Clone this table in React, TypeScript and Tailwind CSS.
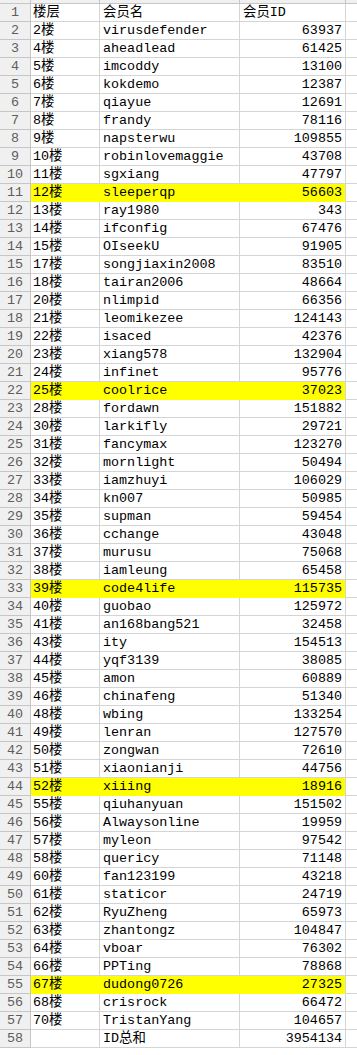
const rows: [string, string, string][] = [
  ['楼层', '会员名', '会员ID'],
  ['2楼', 'virusdefender', '63937'],
  ['4楼', 'aheadlead', '61425'],
  ['5楼', 'imcoddy', '13100'],
  ['6楼', 'kokdemo', '12387'],
  ['7楼', 'qiayue', '12691'],
  ['8楼', 'frandy', '78116'],
  ['9楼', 'napsterwu', '109855'],
  ['10楼', 'robinlovemaggie', '43708'],
  ['11楼', 'sgxiang', '47797'],
  ['12楼', 'sleeperqp', '56603'],
  ['13楼', 'ray1980', '343'],
  ['14楼', 'ifconfig', '67476'],
  ['15楼', 'OIseekU', '91905'],
  ['17楼', 'songjiaxin2008', '83510'],
  ['18楼', 'tairan2006', '48664'],
  ['20楼', 'nlimpid', '66356'],
  ['21楼', 'leomikezee', '124143'],
  ['22楼', 'isaced', '42376'],
  ['23楼', 'xiang578', '132904'],
  ['24楼', 'infinet', '95776'],
  ['25楼', 'coolrice', '37023'],
  ['28楼', 'fordawn', '151882'],
  ['30楼', 'larkifly', '29721'],
  ['31楼', 'fancymax', '123270'],
  ['32楼', 'mornlight', '50494'],
  ['33楼', 'iamzhuyi', '106029'],
  ['34楼', 'kn007', '50985'],
  ['35楼', 'supman', '59454'],
  ['36楼', 'cchange', '43048'],
  ['37楼', 'murusu', '75068'],
  ['38楼', 'iamleung', '65458'],
  ['39楼', 'code4life', '115735'],
  ['40楼', 'guobao', '125972'],
  ['41楼', 'an168bang521', '32458'],
  ['43楼', 'ity', '154513'],
  ['44楼', 'yqf3139', '38085'],
  ['45楼', 'amon', '60889'],
  ['46楼', 'chinafeng', '51340'],
  ['48楼', 'wbing', '133254'],
  ['49楼', 'lenran', '127570'],
  ['50楼', 'zongwan', '72610'],
  ['51楼', 'xiaonianji', '44756'],
  ['52楼', 'xiiing', '18916'],
  ['55楼', 'qiuhanyuan', '151502'],
  ['56楼', 'Alwaysonline', '19959'],
  ['57楼', 'myleon', '97542'],
  ['58楼', 'quericy', '71148'],
  ['60楼', 'fan123199', '43218'],
  ['61楼', 'staticor', '24719'],
  ['62楼', 'RyuZheng', '65973'],
  ['63楼', 'zhantongz', '104847'],
  ['64楼', 'vboar', '76302'],
  ['66楼', 'PPTing', '78868'],
  ['67楼', 'dudong0726', '27325'],
  ['68楼', 'crisrock', '66472'],
  ['70楼', 'TristanYang', '104657'],
  ['', 'ID总和', '3954134'],
];

// rows with yellow fill (1-based sheet row numbers)
const highlighted = new Set([11, 22, 33, 44, 55]);

export default function App() {
  return (
    <div className="w-[357px] h-[1055px] overflow-hidden bg-white text-black text-[13.4px] leading-none font-['Liberation_Mono','Noto_Sans_CJK_SC',monospace]">
      {/* column header strip, mostly scrolled off */}
      <div className="flex h-[4px] bg-[#f0f0f0] border-b border-[#c6c6c6]">
        <div className="w-[31px] shrink-0 border-r border-[#c6c6c6]" />
        <div className="w-[69px] shrink-0 border-r border-[#c6c6c6]" />
        <div className="w-[140px] shrink-0 border-r border-[#c6c6c6]" />
        <div className="w-[106px] shrink-0 border-r border-[#c6c6c6]" />
        <div className="flex-1" />
      </div>

      {rows.map(([floor, name, id], i) => {
        const n = i + 1;
        const hl = highlighted.has(n);
        const cell = hl ? 'bg-[#ffff00] border-[#ffff00]' : 'border-[#d4d4d4]';
        return (
          <div key={n} className="flex h-[18px]">
            <div className="w-[31px] shrink-0 flex items-center justify-center bg-[#f0f0f0] border-r border-b border-[#c6c6c6] text-[#5e5e5e]">
              {n}
            </div>
            <div className={`w-[69px] shrink-0 flex items-center pl-[2px] border-b border-r ${cell}`}>{floor}</div>
            <div className={`w-[140px] shrink-0 flex items-center pl-[3px] border-b border-r ${cell}`}>{name}</div>
            <div
              className={`w-[106px] shrink-0 flex items-center px-[3px] border-b border-r ${hl ? 'bg-[#ffff00] border-b-[#ffff00] border-r-[#d4d4d4]' : 'border-[#d4d4d4]'} ${n === 1 ? 'justify-start' : 'justify-end'}`}
            >
              {id}
            </div>
            <div className="flex-1 border-b border-[#d4d4d4]" />
          </div>
        );
      })}
    </div>
  );
}
